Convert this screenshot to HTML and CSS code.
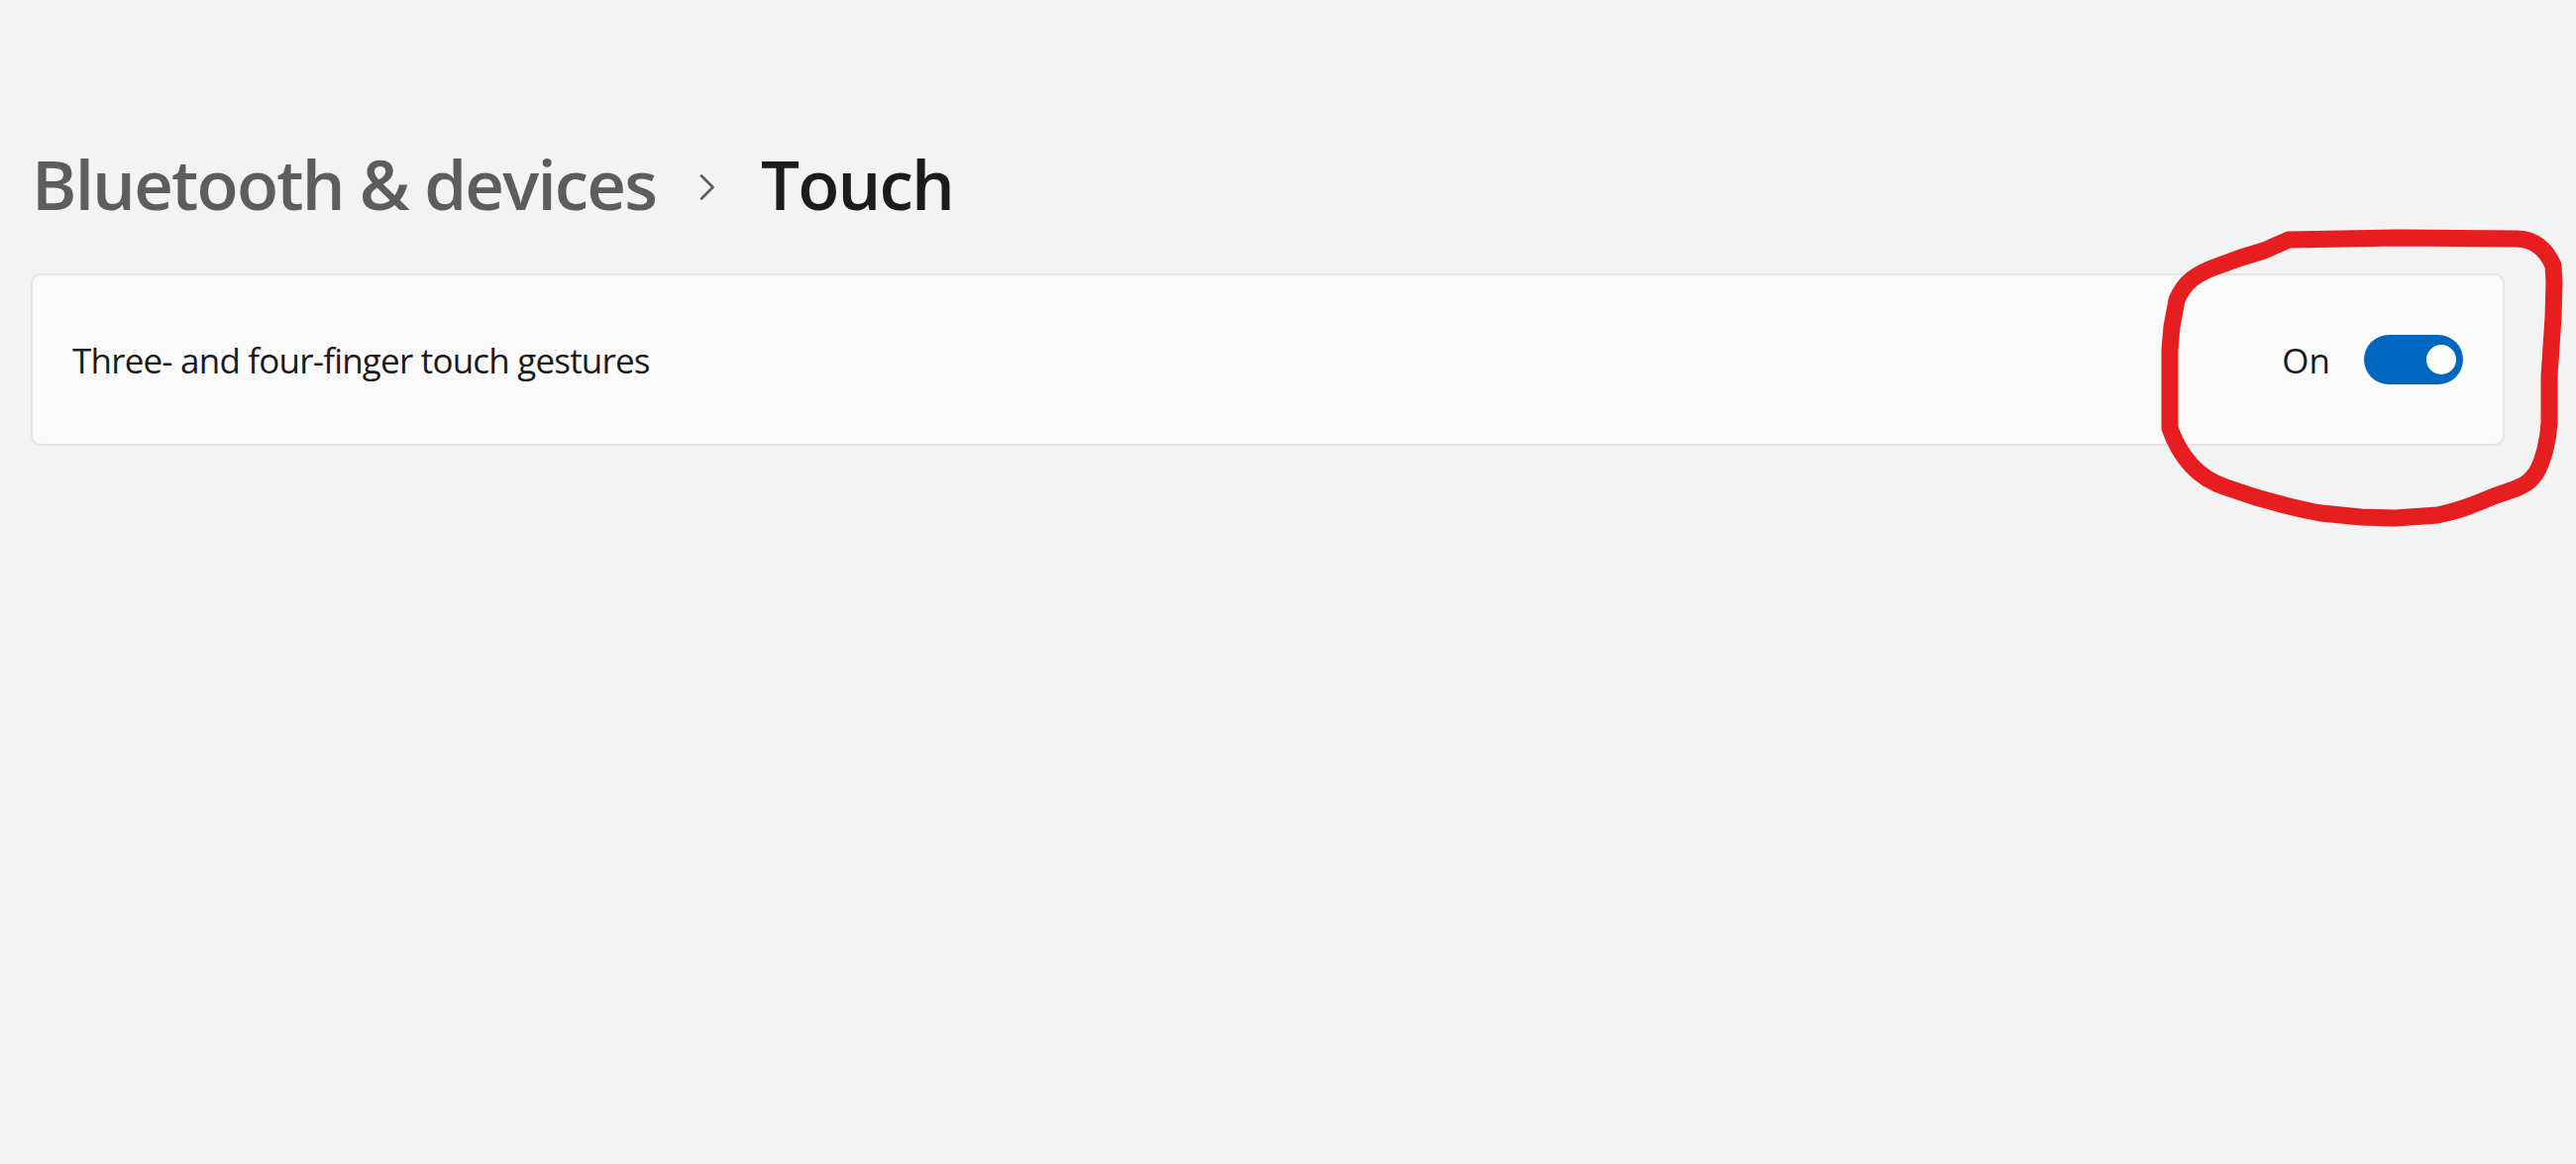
FILE: index.html
```html
<!DOCTYPE html>
<html lang="en">
<head>
<meta charset="utf-8">
<title>Touch</title>
<link rel="stylesheet" href="styles.css">
</head>
<body>
<div class="page">
  <header class="crumbs">
    <span class="crumb-parent">Bluetooth &amp; devices</span>
    <svg class="chev" viewBox="0 0 16 26" width="16" height="26" aria-hidden="true">
      <path d="M2 1.5 L13.5 13 L2 24.5" fill="none" stroke="#5d5d5d" stroke-width="2.6" stroke-linecap="round" stroke-linejoin="round"/>
    </svg>
    <span class="crumb-current">Touch</span>
  </header>
  <section class="card">
    <span class="card-label">Three- and four-finger touch gestures</span>
    <div class="card-control">
      <span class="state">On</span>
      <span class="toggle"><span class="knob"></span></span>
    </div>
  </section>
</div>
<svg class="annotation" viewBox="0 0 2600 1175" width="2600" height="1175" aria-hidden="true">
  <path d="M2310,242 L2420,240 L2540,241 C2558,241 2570,252 2577,268 L2578,285 L2577,320 L2573,380 L2573,427 C2572,445 2567,465 2560,477 C2554,486 2548,490 2537,494 L2517,501 C2500,508 2485,515 2460,520 L2417,523 L2383,522 L2343,518 C2330,516 2318,513 2306,510 L2277,502 L2247,492 C2235,488 2222,481 2212,470 C2203,460 2195,447 2190,432 L2190,387 L2190,353 L2192,330 L2197,303 C2201,293 2206,287 2212,282 C2220,276 2228,272 2240,268 L2262,260 L2285,253 L2310,242 Z" fill="none" stroke="#e61e20" stroke-width="17" stroke-linejoin="round" stroke-linecap="round"/>
</svg>
</body>
</html>
```

FILE: styles.css
```css
html, body {
  margin: 0;
  padding: 0;
}
body {
  background: #f3f3f3;
  width: 2600px;
  height: 1175px;
  overflow: hidden;
  position: relative;
  font-family: "Open Sans", "Noto Sans", sans-serif;
}
.page {
  padding: 140px 72px 0 31px;
}
.crumbs {
  display: flex;
  align-items: center;
  height: 90px;
  padding-left: 1px;
  font-size: 69px;
  font-weight: 600;
  line-height: 90px;
  letter-spacing: -1.8px;
}
.crumb-parent {
  color: #5d5d5d;
}
.chev {
  margin: 8px 46px 0 44px;
}
.crumb-current {
  color: #1b1b1b;
}
.card {
  margin-top: 46px;
  box-sizing: border-box;
  height: 174px;
  background: #fbfbfb;
  border: 2px solid #e5e5e5;
  border-radius: 10px;
  display: flex;
  align-items: center;
  justify-content: space-between;
  padding: 0 40px 0 40px;
}
.card-label {
  font-size: 35px;
  color: #1b1b1b;
  letter-spacing: -0.8px;
}
.card-control {
  display: flex;
  align-items: center;
  gap: 34px;
}
.state {
  font-size: 35px;
  color: #1b1b1b;
}
.toggle {
  width: 100px;
  height: 50px;
  border-radius: 25px;
  background: #0067c0;
  display: flex;
  align-items: center;
  justify-content: flex-end;
  padding-right: 7px;
  box-sizing: border-box;
}
.knob {
  width: 30px;
  height: 30px;
  border-radius: 50%;
  background: #ffffff;
}
.annotation {
  position: absolute;
  top: 0;
  left: 0;
  pointer-events: none;
}
```
